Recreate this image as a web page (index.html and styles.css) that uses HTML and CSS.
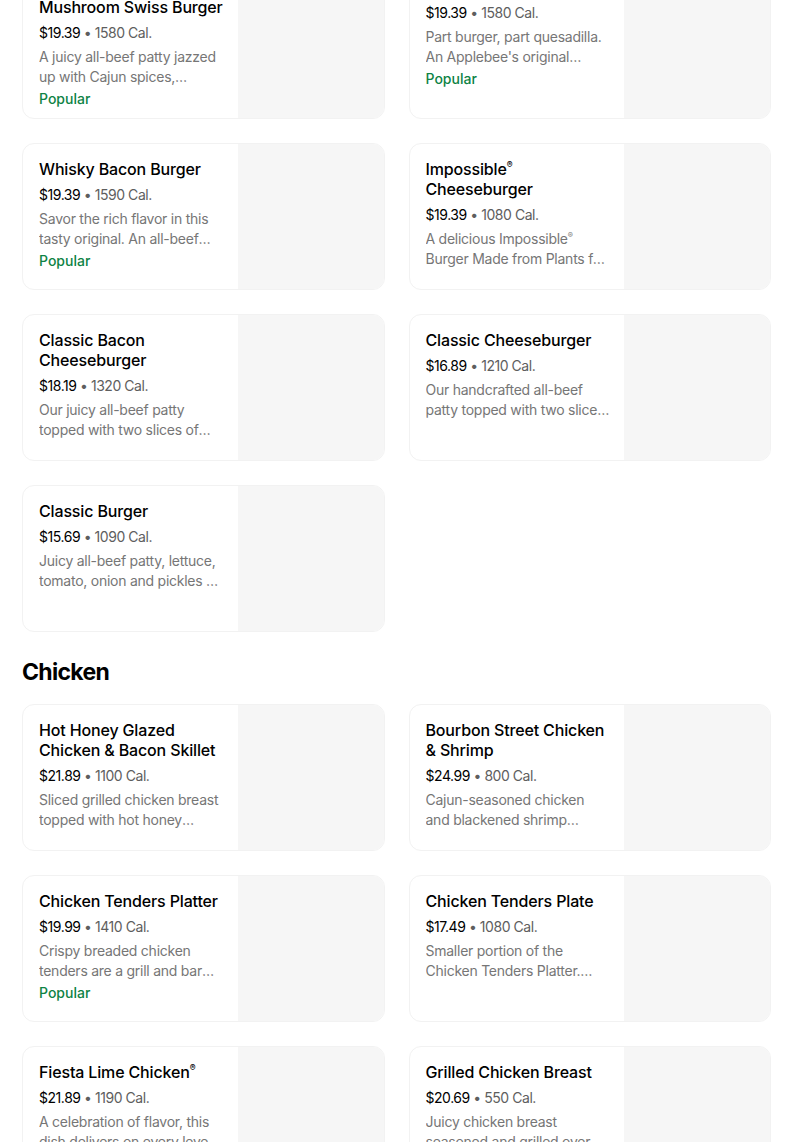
FILE: index.html
```html
<!DOCTYPE html>
<html lang="en">
<head>
<meta charset="utf-8">
<title>Menu</title>
<link rel="stylesheet" href="styles.css">
</head>
<body>
<main class="menu">
  <section class="section first">
    <div class="grid">
      <div class="card">
        <div class="info">
          <div class="title">Applebee's Cajun Steakhouse Stack<br>Mushroom Swiss Burger</div>
          <div class="meta"><span class="price">$19.39</span> • 1580 Cal.</div>
          <div class="desc">A juicy all-beef patty jazzed up with Cajun spices, topped with sautéed mushrooms and melted Swiss cheese.</div>
          <div class="tag">Popular</div>
        </div>
        <div class="thumb"></div>
      </div>
      <div class="card">
        <div class="info">
          <div class="title">Bacon Double Quesadilla Burger</div>
          <div class="meta"><span class="price">$19.39</span> • 1580 Cal.</div>
          <div class="desc">Part burger, part quesadilla. An Applebee's original favorite with pico de gallo and cheese.</div>
          <div class="tag">Popular</div>
        </div>
        <div class="thumb"></div>
      </div>
      <div class="card">
        <div class="info">
          <div class="title">Whisky Bacon Burger</div>
          <div class="meta"><span class="price">$19.39</span> • 1590 Cal.</div>
          <div class="desc">Savor the rich flavor in this tasty original. An all-beef patty topped with Whisky Bacon sauce.</div>
          <div class="tag">Popular</div>
        </div>
        <div class="thumb"></div>
      </div>
      <div class="card">
        <div class="info">
          <div class="title">Impossible<sup class="reg">®</sup> Cheeseburger</div>
          <div class="meta"><span class="price">$19.39</span> • 1080 Cal.</div>
          <div class="desc">A delicious Impossible<sup class="reg">®</sup> Burger Made from Plants for people who love meat.</div>
        </div>
        <div class="thumb"></div>
      </div>
      <div class="card">
        <div class="info">
          <div class="title">Classic Bacon Cheeseburger</div>
          <div class="meta"><span class="price">$18.19</span> • 1320 Cal.</div>
          <div class="desc">Our juicy all-beef patty topped with two slices of hickory-smoked bacon and American cheese.</div>
        </div>
        <div class="thumb"></div>
      </div>
      <div class="card">
        <div class="info">
          <div class="title">Classic Cheeseburger</div>
          <div class="meta"><span class="price">$16.89</span> • 1210 Cal.</div>
          <div class="desc">Our handcrafted all-beef patty topped with two slices of American cheese, lettuce and tomato.</div>
        </div>
        <div class="thumb"></div>
      </div>
      <div class="card">
        <div class="info">
          <div class="title">Classic Burger</div>
          <div class="meta"><span class="price">$15.69</span> • 1090 Cal.</div>
          <div class="desc">Juicy all-beef patty, lettuce, tomato, onion and pickles on a toasted brioche bun.</div>
        </div>
        <div class="thumb"></div>
      </div>
    </div>
  </section>

  <section class="section">
    <h2 class="heading">Chicken</h2>
    <div class="grid">
      <div class="card">
        <div class="info">
          <div class="title">Hot Honey Glazed Chicken &amp; Bacon Skillet</div>
          <div class="meta"><span class="price">$21.89</span> • 1100 Cal.</div>
          <div class="desc">Sliced grilled chicken breast topped with hot honey glaze, crispy bacon and melted cheese.</div>
        </div>
        <div class="thumb"></div>
      </div>
      <div class="card">
        <div class="info">
          <div class="title">Bourbon Street Chicken &amp; Shrimp</div>
          <div class="meta"><span class="price">$24.99</span> • 800 Cal.</div>
          <div class="desc">Cajun-seasoned chicken and blackened shrimp served on a sizzling skillet with onions.</div>
        </div>
        <div class="thumb"></div>
      </div>
      <div class="card">
        <div class="info">
          <div class="title">Chicken Tenders Platter</div>
          <div class="meta"><span class="price">$19.99</span> • 1410 Cal.</div>
          <div class="desc">Crispy breaded chicken tenders are a grill and bar classic, served with fries and coleslaw.</div>
          <div class="tag">Popular</div>
        </div>
        <div class="thumb"></div>
      </div>
      <div class="card">
        <div class="info">
          <div class="title">Chicken Tenders Plate</div>
          <div class="meta"><span class="price">$17.49</span> • 1080 Cal.</div>
          <div class="desc">Smaller portion of the Chicken Tenders Platter. Served with fries and honey Dijon.</div>
        </div>
        <div class="thumb"></div>
      </div>
      <div class="card">
        <div class="info">
          <div class="title">Fiesta Lime Chicken<sup class="reg">®</sup></div>
          <div class="meta"><span class="price">$21.89</span> • 1190 Cal.</div>
          <div class="desc">A celebration of flavor, this dish delivers on every level with zesty lime and cheese.</div>
        </div>
        <div class="thumb"></div>
      </div>
      <div class="card">
        <div class="info">
          <div class="title">Grilled Chicken Breast</div>
          <div class="meta"><span class="price">$20.69</span> • 550 Cal.</div>
          <div class="desc">Juicy chicken breast seasoned and grilled over an open flame, served with two sides.</div>
        </div>
        <div class="thumb"></div>
      </div>
    </div>
  </section>
</main>
</body>
</html>
```

FILE: styles.css
```css
* { box-sizing: border-box; }

html, body {
  margin: 0;
  padding: 0;
  background: #ffffff;
}

body {
  font-family: Inter, "Noto Sans", "Liberation Sans", sans-serif;
  color: #000000;
  overflow: hidden;
}

.menu {
  width: 749px;
  margin-left: 22px;
  margin-top: -59px;
}

.section {
  display: flex;
  flex-direction: column;
}

.heading {
  margin: 24px 0 16px;
  font-size: 23px;
  line-height: 32px;
  font-weight: 700;
  letter-spacing: -0.7px;
}

.grid {
  display: grid;
  grid-template-columns: 1fr 1fr;
  gap: 24px;
}

.card {
  display: flex;
  min-height: 147px;
  border: 1px solid #f2f2f2;
  border-radius: 12px;
  overflow: hidden;
  background: #ffffff;
}

.info {
  flex: 1;
  min-width: 0;
  display: flex;
  flex-direction: column;
  gap: 4px;
  padding: 15px 14px 9px 16px;
}

.title {
  margin-bottom: 2px;
  font-size: 16px;
  line-height: 20px;
  font-weight: 500;
  letter-spacing: -0.15px;
}

.reg {
  font-size: 0.55em;
  line-height: 0;
  vertical-align: 0.75em;
}

.meta {
  font-size: 14px;
  line-height: 20px;
  color: #5e5e5e;
  letter-spacing: -0.45px;
}

.price {
  color: #000000;
}

.desc {
  font-size: 14px;
  line-height: 20px;
  color: #767676;
  letter-spacing: -0.25px;
  display: -webkit-box;
  -webkit-box-orient: vertical;
  -webkit-line-clamp: 2;
  overflow: hidden;
}

.tag {
  margin-top: -2px;
  font-size: 14px;
  line-height: 20px;
  font-weight: 500;
  color: #0e8345;
}

.thumb {
  flex: 0 0 146px;
  background: #f6f6f6;
}
```
